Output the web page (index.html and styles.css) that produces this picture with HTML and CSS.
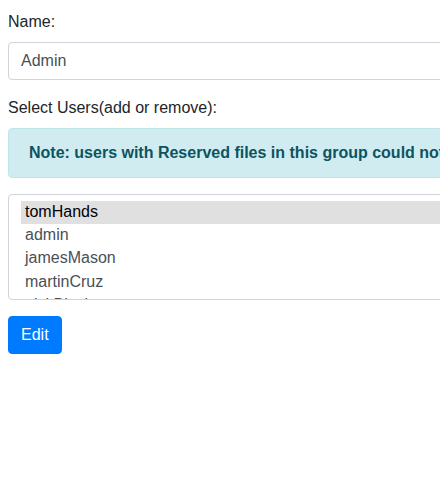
FILE: index.html
```html
<!DOCTYPE html>
<html>
<head>
<meta charset="utf-8">
<link rel="stylesheet" href="styles.css">
</head>
<body>
<div class="page">
  <form class="form">
    <div class="form-group">
      <label class="label" for="name">Name:</label>
      <input class="control" id="name" type="text" value="Admin">
    </div>
    <div class="form-group">
      <label class="label" for="users">Select Users(add or remove):</label>
      <div class="alert">Note: users with Reserved files in this group could not be removed from the group.</div>
      <select class="control list" id="users" multiple>
        <option selected>tomHands</option>
        <option>admin</option>
        <option>jamesMason</option>
        <option>martinCruz</option>
        <option>nickBlack</option>
      </select>
    </div>
    <button class="btn" type="button">Edit</button>
  </form>
</div>
</body>
</html>
```
FILE: styles.css
```css
html, body {
  margin: 0;
  padding: 0;
  overflow: hidden;
  background: #fff;
}
body {
  font-family: "Liberation Sans", Arial, sans-serif;
  font-size: 16px;
  line-height: 1.5;
  color: #212529;
}
.page {
  padding: 10px 8px;
}
.form {
  width: 760px;
}
.form-group {
  margin-bottom: 16px;
}
.label {
  display: block;
  margin-bottom: 8px;
}
.control {
  display: block;
  box-sizing: border-box;
  width: 100%;
  height: 38px;
  padding: 6px 12px;
  font-family: inherit;
  font-size: 16px;
  line-height: 1.5;
  color: #495057;
  background: #fff;
  border: 1px solid #ced4da;
  border-radius: 4px;
  margin: 0;
}
.list {
  height: 106px;
  overflow: hidden;
}
.list option {
  padding: 2px 4px;
}
.list option:checked {
  background: #e0e0e0;
  color: #000;
}
.alert {
  padding: 12px 20px;
  margin-bottom: 16px;
  border: 1px solid #bee5eb;
  border-radius: 4px;
  background: #d1ecf1;
  color: #0c5460;
  font-weight: bold;
  white-space: nowrap;
}
.btn {
  display: inline-block;
  font-family: inherit;
  font-size: 16px;
  line-height: 1.5;
  padding: 6px 12px;
  color: #fff;
  background: #007bff;
  border: 1px solid #007bff;
  border-radius: 4px;
  margin: 0;
}
```
